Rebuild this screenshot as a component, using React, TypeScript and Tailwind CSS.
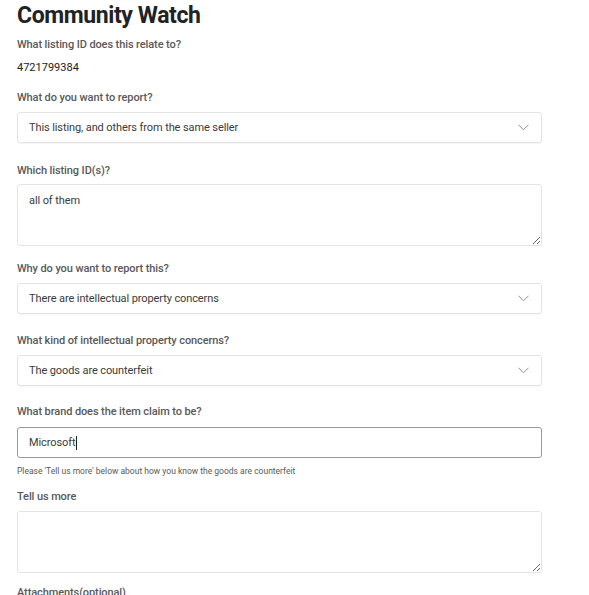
import React from "react";

const font = { fontFamily: "Roboto, 'Liberation Sans', sans-serif" };

function Chevron() {
  return (
    <svg width="11" height="7" viewBox="0 0 11 7" fill="none" className="shrink-0">
      <path d="M0.5 0.8 L5.5 5.8 L10.5 0.8" stroke="#8a8a8a" strokeWidth="1" />
    </svg>
  );
}

function Label({ children, className = "" }: { children: React.ReactNode; className?: string }) {
  return (
    <div className={"text-[11px] leading-[14px] font-medium text-[#595959] tracking-[-0.1px] " + className}>
      {children}
    </div>
  );
}

function Select({ value }: { value: string }) {
  return (
    <div className="mt-[7px] flex h-[31px] w-[525px] items-center justify-between rounded-[3px] border border-[#e4e4e4] bg-white pl-[11px] pr-[12px] shadow-[0_1px_1px_rgba(0,0,0,0.04)]">
      <span className="text-[11px] leading-[14px] text-[#3b3b3b] tracking-[-0.1px]">{value}</span>
      <Chevron />
    </div>
  );
}

function Area({ value, className = "" }: { value: string; className?: string }) {
  return (
    <textarea
      readOnly
      value={value}
      className={"block h-[62px] w-[525px] rounded-[3px] border border-[#e4e4e4] bg-white px-[11px] py-[9px] text-[11px] leading-[14px] text-[#3b3b3b] outline-none tracking-[-0.1px] " + className}
      style={font}
    />
  );
}

export default function App() {
  return (
    <div className="min-h-[595px] w-[589px] overflow-hidden bg-white pl-[17px]" style={font}>
      <h1 className="pt-[1px] text-[23px] leading-[30px] font-bold text-[#222222] tracking-[-0.4px]">Community Watch</h1>
      <Label className="mt-[7px]">What listing ID does this relate to?</Label>
      <div className="mt-[9px] text-[11px] leading-[14px] text-[#222222]">4721799384</div>

      <Label className="mt-[16px]">What do you want to report?</Label>
      <Select value="This listing, and others from the same seller" />

      <Label className="mt-[21px]">Which listing ID(s)?</Label>
      <Area value="all of them" className="mt-[6px]" />

      <Label className="mt-[16px]">Why do you want to report this?</Label>
      <Select value="There are intellectual property concerns" />

      <Label className="mt-[20px]">What kind of intellectual property concerns?</Label>
      <Select value="The goods are counterfeit" />

      <Label className="mt-[19px]">What brand does the item claim to be?</Label>
      <div className="mt-[8px] flex h-[31px] w-[525px] items-center rounded-[3px] border border-[#9a9a9a] bg-white pl-[11px]">
        <span className="text-[11px] leading-[14px] text-[#3b3b3b] tracking-[-0.1px]">Microsoft</span>
        <span className="ml-[1px] h-[14px] w-px bg-[#222222]" />
      </div>
      <div className="mt-[7px] text-[8.5px] leading-[12px] text-[#595959]">
        Please 'Tell us more' below about how you know the goods are counterfeit
      </div>

      <Label className="mt-[13px]">Tell us more</Label>
      <Area value="" className="mt-[7px]" />

      <Label className="mt-[13px]">Attachments(optional)</Label>
    </div>
  );
}
